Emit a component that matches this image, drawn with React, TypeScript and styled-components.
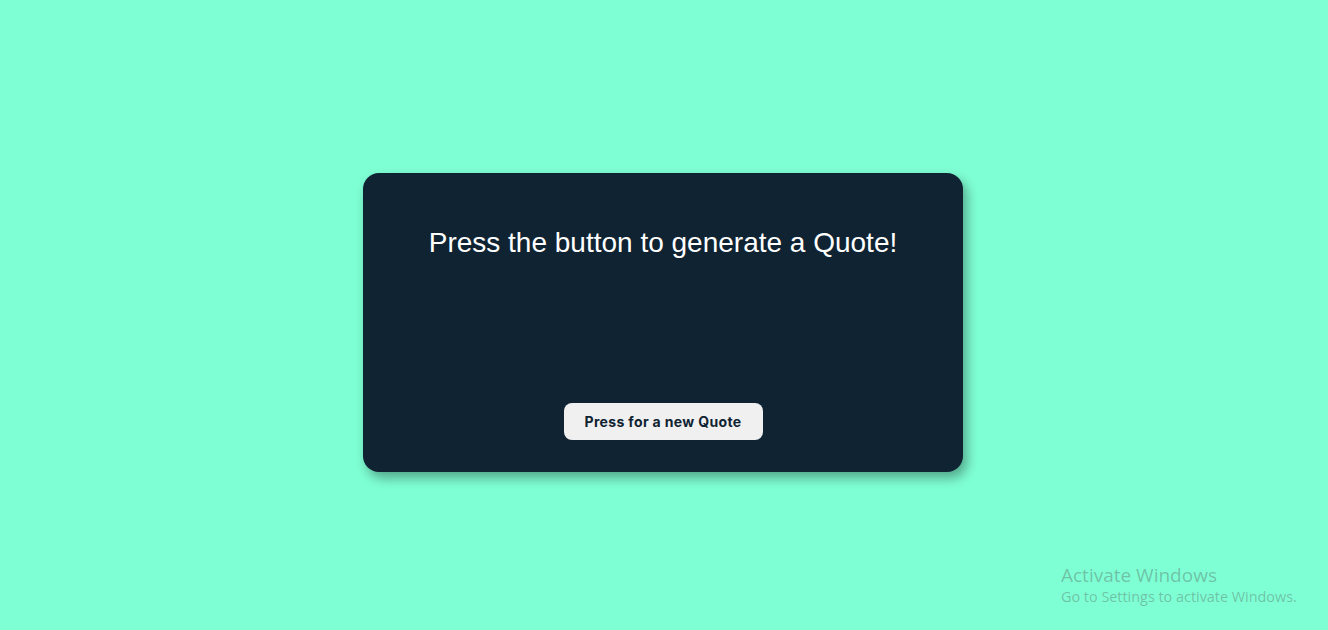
import React from "react";
import styled, { createGlobalStyle } from "styled-components";

const GlobalStyle = createGlobalStyle`
  html, body { margin: 0; padding: 0; }
  body { background: #7fffd4; font-family: "Liberation Sans", Arial, sans-serif; }
`;

const Page = styled.main`
  min-height: 630px;
  box-sizing: border-box;
  padding: 173px 2px 0 0;
  display: flex;
  justify-content: center;
  align-items: flex-start;
  position: relative;
`;

const Card = styled.section`
  width: 600px;
  height: 299px;
  box-sizing: border-box;
  background: #0f2332;
  border-radius: 16px;
  box-shadow: 4px 6px 12px rgba(0, 0, 0, 0.35);
  display: flex;
  flex-direction: column;
  align-items: center;
  justify-content: space-between;
  padding: 51px 24px 32px;
`;

const Quote = styled.h1`
  margin: 0;
  color: #ffffff;
  font-family: "Liberation Sans", Arial, sans-serif;
  font-weight: 400;
  font-size: 28px;
  line-height: 38px;
  text-align: center;
`;

const Button = styled.button`
  width: 199px;
  height: 37px;
  border: none;
  border-radius: 8px;
  background: #f0f0f0;
  color: #0f2332;
  font-family: "Inter", "Liberation Sans", sans-serif;
  font-weight: 700;
  font-size: 14px;
  letter-spacing: 0.35px;
  cursor: pointer;
`;

const Watermark = styled.div`
  position: absolute;
  left: 1061px;
  top: 563px;
  font-family: "Open Sans", "Noto Sans", sans-serif;
  color: rgba(90, 120, 110, 0.45);
`;

const WatermarkTitle = styled.div`
  font-size: 19px;
  line-height: 24px;
`;

const WatermarkText = styled.div`
  font-size: 14.4px;
  line-height: 20px;
`;

export default function App() {
  return (
    <>
      <GlobalStyle />
      <Page>
        <Card>
          <Quote>Press the button to generate a Quote!</Quote>
          <Button>Press for a new Quote</Button>
        </Card>
        <Watermark>
          <WatermarkTitle>Activate Windows</WatermarkTitle>
          <WatermarkText>Go to Settings to activate Windows.</WatermarkText>
        </Watermark>
      </Page>
    </>
  );
}
